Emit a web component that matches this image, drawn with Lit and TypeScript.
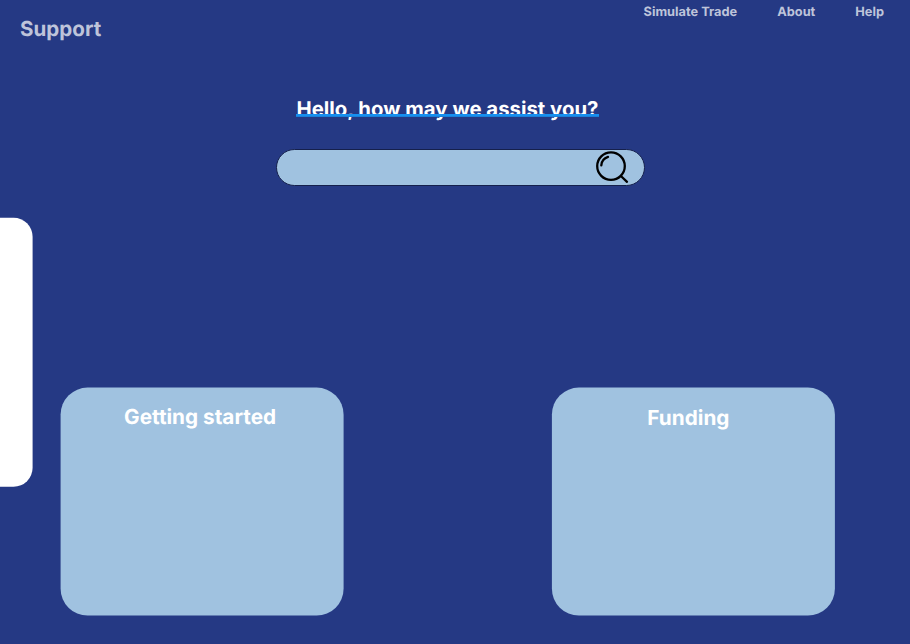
import { LitElement, html, css } from "lit";
import { customElement, property } from "lit/decorators.js";

@customElement("topic-card")
class TopicCard extends LitElement {
  @property() heading = "";

  static styles = css`
    :host {
      display: block;
      box-sizing: border-box;
      width: 283px;
      height: 228px;
      border-radius: 27px;
      background: #a0c2e0;
      transform: translate(-0.4px, -0.4px);
    }
    .title {
      margin: 0;
      font-size: 20.75px;
      line-height: 26px;
      font-weight: 700;
      color: #fff;
      text-align: center;
      white-space: nowrap;
    }
  `;

  render() {
    return html`<h2 class="title">${this.heading}</h2>`;
  }
}

@customElement("app-root")
class AppRoot extends LitElement {
  static styles = css`
    :host {
      display: flex;
      flex-direction: column;
      box-sizing: border-box;
      height: 644px;
      overflow: hidden;
      background: #253984;
      font-family: Inter, "Liberation Sans", sans-serif;
      font-optical-sizing: none;
      text-rendering: geometricPrecision;
    }
    .top {
      display: flex;
      justify-content: space-between;
      align-items: flex-start;
      height: 96px;
      padding: 0 26px 0 20px;
      color: #bec4da;
    }
    .brand {
      margin: 16px 0 0;
      font-size: 20.6px;
      line-height: 26px;
      font-weight: 700;
    }
    .nav {
      display: flex;
      gap: 40px;
      margin-top: 5px;
      font-size: 12.8px;
      line-height: 16px;
      font-weight: 700;
      white-space: nowrap;
    }
    .greeting {
      align-self: flex-start;
      margin: 0 0 0 296.5px;
      height: 53px;
      font-size: 20.35px;
      line-height: 26px;
      font-weight: 700;
      color: #fff;
      white-space: nowrap;
    }
    .line {
      position: relative;
      display: inline-block;
    }
    .line::after {
      content: "";
      position: absolute;
      left: -0.5px;
      right: 0;
      top: 18px;
      height: 3px;
      background: linear-gradient(#1690f0 2px, #1b7fd8 2px);
    }
    .search {
      display: flex;
      justify-content: flex-end;
      box-sizing: border-box;
      width: 369px;
      height: 37px;
      margin-left: 276px;
      padding-right: 15px;
      border: 1px solid #15204c;
      border-radius: 18.5px;
      background: #a0c2e0;
    }
    .glass {
      display: block;
      width: 34px;
      height: 35px;
    }
    .drawer {
      width: 33px;
      height: 269px;
      margin-top: 32px;
      border-radius: 0 19px 19px 0;
      background: #fff;
      transform: translate(-0.4px, -0.2px);
    }
    .cards {
      display: flex;
      gap: 208px;
      margin: -99px 0 0 61px;
    }
    .start {
      padding: 17px 4px 0 0;
    }
    .fund {
      padding: 18px 10px 0 0;
      transform: translate(-0.1px, -0.4px);
    }
  `;

  render() {
    return html`
      <header class="top">
        <h1 class="brand">Support</h1>
        <nav class="nav">
          <span>Simulate Trade</span><span>About</span><span>Help</span>
        </nav>
      </header>
      <div class="greeting">
        <span class="line">Hello, how may we assist you?</span>
      </div>
      <div class="search">
        <svg class="glass" viewBox="0 0 34 35" fill="none" stroke="#000" stroke-width="2.3" stroke-linecap="round">
          <circle cx="16" cy="16.1" r="13.8" />
          <path d="M6.3 15.4A9.7 9.7 0 0 1 13 6.9M25.9 26L32 31.8" />
        </svg>
      </div>
      <aside class="drawer"></aside>
      <main class="cards">
        <topic-card class="start" heading="Getting started"></topic-card>
        <topic-card class="fund" heading="Funding"></topic-card>
      </main>
    `;
  }
}
